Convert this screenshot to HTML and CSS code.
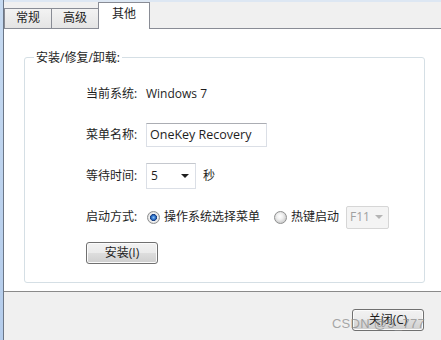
FILE: index.html
```html
<!DOCTYPE html>
<html lang="zh-CN">
  <head>
    <meta charset="UTF-8" />
    <title>其他</title>
    <link rel="stylesheet" href="styles.css">
  </head>
  <body>
    <div class="window">
      <div class="frame-edge"></div>
      <div class="dialog">
        <!-- tab strip -->
        <div class="tabs">
          <div class="tab">常规</div>
          <div class="tab">高级</div>
          <div class="tab active">其他</div>
        </div>

        <div class="panel">
          <fieldset class="group">
            <legend>安装/修复/卸载:</legend>
            <div class="group-body">
              <div class="row">
                <span class="label">当前系统:</span>
                <span class="value">Windows 7</span>
              </div>
              <div class="row">
                <span class="label">菜单名称:</span>
                <div class="textbox">OneKey Recovery</div>
              </div>
              <div class="row">
                <span class="label">等待时间:</span>
                <div class="combo">
                  <span>5</span>
                  <span class="arrow"></span>
                </div>
                <span class="unit">秒</span>
              </div>
              <div class="row">
                <span class="label">启动方式:</span>
                <span class="radio checked"></span>
                <span class="radio-text">操作系统选择菜单</span>
                <span class="radio"></span>
                <span class="radio-text last">热键启动</span>
                <div class="combo disabled">
                  <span>F11</span>
                  <span class="arrow"></span>
                </div>
              </div>
              <div class="row button-row">
                <button class="btn install">安装(I)</button>
              </div>
            </div>
          </fieldset>
        </div>

        <div class="footer">
          <button class="btn close">关闭(C)</button>
          <span class="watermark">CSDN @5_777</span>
        </div>
      </div>
    </div>
  </body>
</html>
```

FILE: styles.css
```css
/* Win7 style options dialog */
body {
  margin: 0;
  width: 441px;
  height: 340px;
  overflow: hidden;
  font-family: "Open Sans", "Noto Sans CJK SC", sans-serif;
  font-size: 12px;
  line-height: 16px;
  color: #1e1e1e;
  background: #f0f0f0;
}

.window {
  display: flex;
  height: 340px;
}

.frame-edge {
  width: 3px;
  background: linear-gradient(#c6daf1, #b4cceb);
}

.dialog {
  flex: 1;
  display: flex;
  flex-direction: column;
  border-left: 1px solid #6b7686;
  background: #f0f0f0;
}

/* Tabs */
.tabs {
  height: 28px;
  box-sizing: border-box;
  display: flex;
  align-items: flex-end;
  border-top: 2px solid #dde7f3;
}

.tab {
  height: 20px;
  box-sizing: border-box;
  padding: 0 11px;
  border: 1px solid #898c95;
  border-bottom: none;
  margin-right: -1px;
  background: linear-gradient(#f3f3f3, #e4e4e4);
  line-height: 18px;
}

.tab.active {
  position: relative;
  z-index: 1;
  height: 27px;
  margin-bottom: -1px;
  padding: 0 13px;
  background: #ffffff;
  line-height: 22px;
}

/* Page */
.panel {
  height: 264px;
  box-sizing: border-box;
  border-top: 1px solid #898c95;
  border-bottom: 1px solid #8a8a8a;
  background: #ffffff;
  padding: 0 16px 0 20px;
}

.group {
  margin: 20px 0 0;
  padding: 0;
  min-width: 0;
  border: 1px solid #d5dfe5;
  border-radius: 3px;
}

.group legend {
  margin-left: 9px;
  padding: 0 2px;
  line-height: 17px;
}

.group-body {
  display: flex;
  flex-direction: column;
  gap: 17px;
  padding: 16px 0 18px 61px;
}

.row {
  display: flex;
  align-items: center;
  height: 24px;
}

.label {
  width: 60px;
}

.textbox {
  width: 121px;
  height: 24px;
  box-sizing: border-box;
  padding: 0 3px;
  border: 1px solid #dbdfe6;
  border-top-color: #abadb3;
  line-height: 22px;
  font-size: 12.5px;
}

.combo {
  width: 50px;
  height: 26px;
  box-sizing: border-box;
  display: flex;
  align-items: center;
  justify-content: space-between;
  padding: 0 4px 0 4px;
  border: 1px solid #dbdfe6;
  border-top-color: #c5c8ce;
  background: #ffffff;
}

.combo .arrow {
  width: 0;
  height: 0;
  border-left: 4px solid transparent;
  border-right: 4px solid transparent;
  border-top: 4px solid #1e1e1e;
  margin-right: 2px;
}

.combo.disabled {
  width: 43px;
  height: 23px;
  margin-left: 7px;
  padding: 0 3px 0 3px;
  border: 1px solid #d6d6d6;
  border-radius: 2px;
  background: #f4f4f4;
  color: #a0a0a0;
}

.combo.disabled .arrow {
  border-top-color: #b5b5b5;
}

.unit {
  margin-left: 7px;
}

/* Radios */
.radio {
  width: 11px;
  height: 11px;
  border: 1px solid #8e8f8f;
  border-radius: 50%;
  margin-left: 1px;
  background: radial-gradient(circle at 45% 40%, #ffffff 0, #f0f0f0 3px, #d3d3d3 6px);
}

.radio.checked {
  background: radial-gradient(circle at 50% 50%, #8cc4f5 0, #2c6fc9 2px, #1a3f7f 3.2px, #f4f4f4 3.8px, #d8d8d8 6px);
}

.radio-text {
  margin-left: 4px;
  margin-right: 13px;
}

.radio-text.last {
  margin-right: 0;
}

/* Buttons */
.btn {
  height: 22px;
  box-sizing: border-box;
  padding: 0;
  border: 1px solid #707070;
  border-radius: 3px;
  background: linear-gradient(#f2f2f2 0%, #ebebeb 48%, #dddddd 52%, #cfcfcf 100%);
  box-shadow: inset 0 0 0 1px #fbfbfb;
  font: inherit;
  color: #1e1e1e;
  line-height: 18px;
}

.button-row {
  height: 22px;
  margin-top: -4px;
}

.install {
  width: 72px;
}

.footer {
  position: relative;
  flex: 1;
  display: flex;
  justify-content: flex-end;
  align-items: flex-start;
  padding: 17px 17px 0 0;
}

.close {
  width: 72px;
}

.watermark {
  position: absolute;
  right: 16px;
  top: 24px;
  font-family: "Liberation Sans", sans-serif;
  font-size: 13px;
  color: rgba(140, 140, 140, 0.75);
  letter-spacing: 0.3px;
}
```
